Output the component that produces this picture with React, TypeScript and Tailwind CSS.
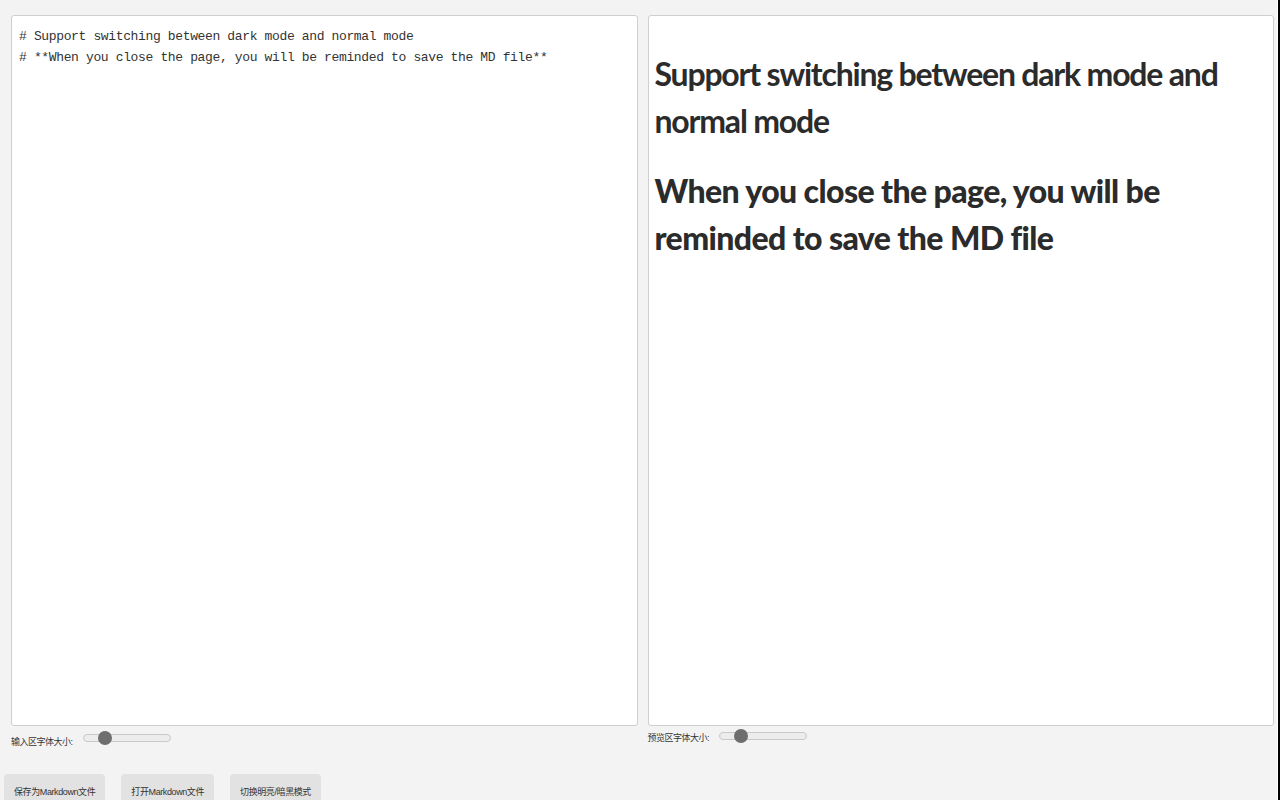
import { useState } from "react";

const md =
  "# Support switching between dark mode and normal mode\n# **When you close the page, you will be reminded to save the MD file**";

function FontSlider({ value, onChange }: { value: number; onChange: (v: number) => void }) {
  return (
    <input
      type="range"
      min={10}
      max={40}
      value={value}
      onChange={(e) => onChange(Number(e.target.value))}
      className="h-2 w-[88px] cursor-pointer appearance-none rounded-full border border-[#c9c9c9] bg-[#ececec] outline-none [&::-webkit-slider-thumb]:size-[14px] [&::-webkit-slider-thumb]:appearance-none [&::-webkit-slider-thumb]:rounded-full [&::-webkit-slider-thumb]:bg-[#6e6e6e]"
    />
  );
}

export default function App() {
  const [inputSize, setInputSize] = useState(16);
  const [previewSize, setPreviewSize] = useState(16);

  return (
    <div className="flex h-[800px] w-[1280px] overflow-hidden bg-[#f3f3f3] font-['Liberation_Sans','Noto_Sans_CJK_SC',sans-serif] text-[#333]">
      <div className="flex flex-1 flex-col">
        <div className="flex gap-[10px] pt-[15px] pl-[11px] pr-[3px]">
          <div className="flex flex-1 flex-col">
            <textarea
              defaultValue={md}
              spellCheck={false}
              className="h-[711px] w-full resize-none rounded-[3px] border border-[#cfcfcf] bg-white px-[7px] py-[10px] font-['Liberation_Mono',monospace] text-[13px] leading-[21px] tracking-[-0.36px] text-[#333] outline-none"
            />
            <div className="mt-[1px] flex items-center gap-[10px] text-[9px] tracking-[-0.5px]">
              <span className="mt-[9px]">输入区字体大小:</span>
              <FontSlider value={inputSize} onChange={setInputSize} />
            </div>
          </div>
          <div className="flex flex-1 flex-col">
            <div className="h-[711px] overflow-auto rounded-[3px] border border-[#cfcfcf] bg-white px-[6px] py-[13px] font-['Lato',sans-serif] text-[#2b2b2b]">
              <h1 className="my-[21px] text-[32px] leading-[47px] font-bold tracking-[-1.2px]">
                Support switching between dark mode and normal mode
              </h1>
              <h1 className="mt-[23px] mb-[21px] text-[32px] leading-[47px] font-black tracking-[-0.6px]">
                When you close the page, you will be reminded to save the MD file
              </h1>
            </div>
            <div className="flex items-center gap-[10px] text-[9px] tracking-[-0.5px]">
              <span className="mt-[6px]">预览区字体大小:</span>
              <FontSlider value={previewSize} onChange={setPreviewSize} />
            </div>
          </div>
        </div>
        <div className="mt-[24px] flex gap-[16px] pl-[4px]">
          <button className="h-[34px] rounded-[4px] bg-[#e2e2e2] px-[10px] pt-[4px] text-[9px] tracking-[-0.4px] text-[#333]">
            保存为Markdown文件
          </button>
          <button className="h-[34px] rounded-[4px] bg-[#e2e2e2] px-[10px] pt-[4px] text-[9px] tracking-[-0.4px] text-[#333]">
            打开Markdown文件
          </button>
          <button className="h-[34px] rounded-[4px] bg-[#e2e2e2] px-[10px] pt-[4px] text-[9px] tracking-[-0.4px] text-[#333]">
            切换明亮/暗黑模式
          </button>
        </div>
      </div>
      <div className="w-px shrink-0 bg-white" />
      <div className="w-[2px] shrink-0 bg-black" />
    </div>
  );
}
